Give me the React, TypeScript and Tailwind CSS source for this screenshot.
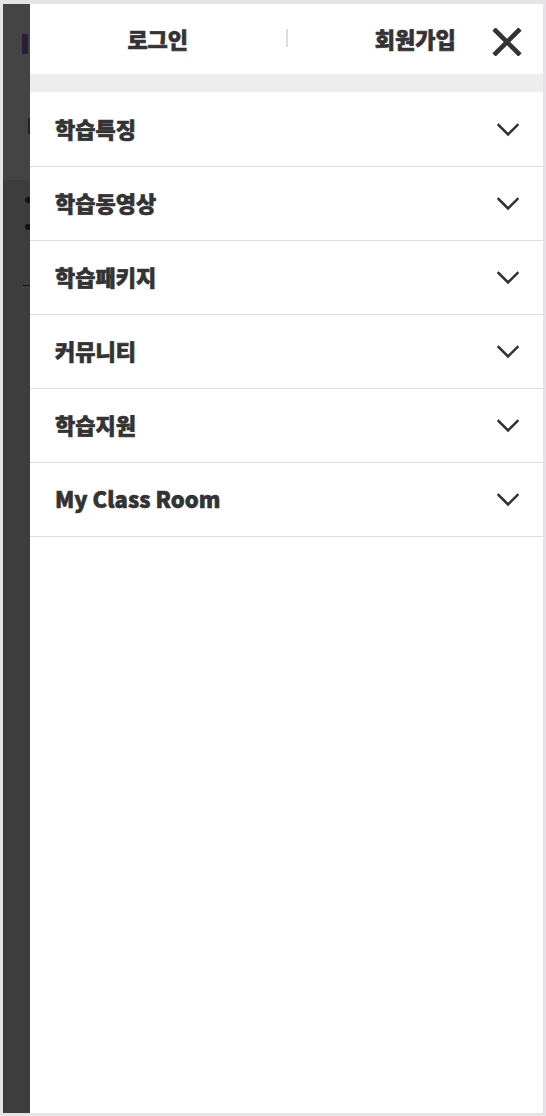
import React from 'react';

const menus = ['학습특징', '학습동영상', '학습패키지', '커뮤니티', '학습지원', 'My Class Room'];

const Chevron = () => (
  <svg width="22" height="14" viewBox="0 0 22 14" fill="none" className="shrink-0">
    <path d="M1.5 2 L11 11.5 L20.5 2" stroke="#333" strokeWidth="2.6" strokeLinecap="square" />
  </svg>
);

const CloseIcon = () => (
  <svg width="30" height="28" viewBox="0 0 30 28" fill="none">
    <path d="M2 1 L28 27 M28 1 L2 27" stroke="#333" strokeWidth="4.6" />
  </svg>
);

export default function App() {
  return (
    <div
      className="w-[546px] h-[1116px] bg-[#e6e3e6] pt-[4px] pl-[3px] pr-[3px] pb-[3px] overflow-hidden"
      style={{ fontFamily: '"Noto Sans CJK KR", "Noto Sans", sans-serif' }}
    >
      <div className="flex h-full bg-[#404040]">
        {/* dimmed page behind the drawer */}
        <div className="w-[27px] shrink-0 flex flex-col">
          <div className="h-[176px] bg-[#444444] flex flex-col">
            <div className="mt-[30px] ml-[19px] w-[6px] h-[20px] bg-[#2a1d3a]" />
            <div className="mt-[64px] ml-[25px] w-[3px] h-[16px] bg-[#222]" />
          </div>
          <div className="flex-1 bg-[#3d3d3d] flex flex-col">
            <div className="mt-[17px] ml-[22px] w-[6px] h-[6px] rounded-full bg-[#111]" />
            <div className="mt-[21px] ml-[22px] w-[6px] h-[6px] rounded-full bg-[#111]" />
            <div className="mt-[55px] ml-[20px] w-[7px] h-px bg-[#111]" />
          </div>
        </div>

        {/* drawer */}
        <div className="flex-1 bg-white flex flex-col relative">
          <div className="h-[70px] pb-[2px] flex items-center text-[22px] font-black text-[#333] leading-none [-webkit-text-stroke:0.6px_#333]">
            <div className="flex-1 text-center">로그인</div>
            <div className="w-[2px] h-[18px] bg-[#dddddd]" />
            <div className="flex-1 text-center">회원가입</div>
          </div>
          <button className="absolute right-[21px] top-[24px]">
            <CloseIcon />
          </button>
          <div className="h-[18px] bg-[#ededed]" />
          <ul className="flex flex-col">
            {menus.map((m, i) => (
              <li
                key={m}
                className={`${i === 0 ? 'h-[75px] pt-px' : 'h-[74px]'} border-b border-[#dddddd] flex items-center justify-between pl-[25px] pr-[24px]`}
              >
                <span className="text-[22px] font-black text-[#333] leading-none pb-[4px] [-webkit-text-stroke:0.6px_#333]">
                  {m}
                </span>
                <Chevron />
              </li>
            ))}
          </ul>
        </div>
      </div>
    </div>
  );
}
